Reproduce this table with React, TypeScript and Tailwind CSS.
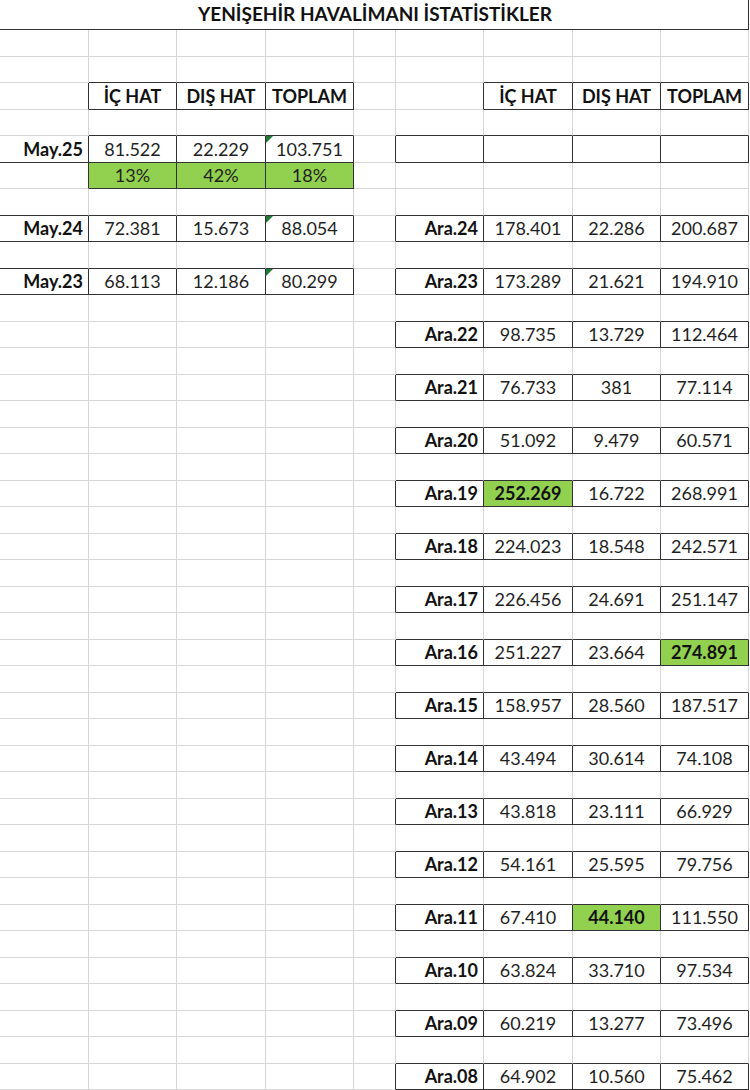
type Sides = { t?: boolean; b?: boolean; l?: boolean; r?: boolean };

interface Cell {
  text?: string;
  bold?: boolean;
  label?: boolean;
  green?: boolean;
  tri?: boolean;
  dark?: Sides;
}

const ROWS = 40;
const COLS = 9;
const ALL: Sides = { t: true, b: true, l: true, r: true };

const leftRows: { row: number; label: string; values: string[] }[] = [
  { row: 4, label: 'May.25', values: ['81.522', '22.229', '103.751'] },
  { row: 7, label: 'May.24', values: ['72.381', '15.673', '88.054'] },
  { row: 9, label: 'May.23', values: ['68.113', '12.186', '80.299'] },
];

const rightRows: { label: string; values: string[]; hi?: number }[] = [
  { label: 'Ara.24', values: ['178.401', '22.286', '200.687'] },
  { label: 'Ara.23', values: ['173.289', '21.621', '194.910'] },
  { label: 'Ara.22', values: ['98.735', '13.729', '112.464'] },
  { label: 'Ara.21', values: ['76.733', '381', '77.114'] },
  { label: 'Ara.20', values: ['51.092', '9.479', '60.571'] },
  { label: 'Ara.19', values: ['252.269', '16.722', '268.991'], hi: 0 },
  { label: 'Ara.18', values: ['224.023', '18.548', '242.571'] },
  { label: 'Ara.17', values: ['226.456', '24.691', '251.147'] },
  { label: 'Ara.16', values: ['251.227', '23.664', '274.891'], hi: 2 },
  { label: 'Ara.15', values: ['158.957', '28.560', '187.517'] },
  { label: 'Ara.14', values: ['43.494', '30.614', '74.108'] },
  { label: 'Ara.13', values: ['43.818', '23.111', '66.929'] },
  { label: 'Ara.12', values: ['54.161', '25.595', '79.756'] },
  { label: 'Ara.11', values: ['67.410', '44.140', '111.550'], hi: 1 },
  { label: 'Ara.10', values: ['63.824', '33.710', '97.534'] },
  { label: 'Ara.09', values: ['60.219', '13.277', '73.496'] },
  { label: 'Ara.08', values: ['64.902', '10.560', '75.462'] },
];

function buildSheet(): Cell[][] {
  const s: Cell[][] = Array.from({ length: ROWS }, () => Array.from({ length: COLS }, () => ({})));
  const heads = ['İÇ HAT', 'DIŞ HAT', 'TOPLAM'];

  heads.forEach((h, i) => {
    s[2][1 + i] = { text: h, bold: true, dark: ALL };
    s[2][6 + i] = { text: h, bold: true, dark: ALL };
  });

  leftRows.forEach((r, idx) => {
    s[r.row][0] = { text: r.label, label: true, dark: idx === 0 ? { b: true } : { t: true, b: true } };
    r.values.forEach((v, i) => {
      s[r.row][1 + i] = { text: v, dark: ALL, tri: i === 2 };
    });
  });

  ['13%', '42%', '18%'].forEach((v, i) => {
    s[5][1 + i] = { text: v, green: true, dark: ALL };
  });

  // empty bordered row on the right
  for (let c = 5; c < 9; c++) s[4][c] = { dark: ALL };

  rightRows.forEach((r, k) => {
    const row = 7 + k * 2;
    s[row][5] = { text: r.label, label: true, dark: ALL };
    r.values.forEach((v, i) => {
      const hi = r.hi === i;
      s[row][6 + i] = { text: v, dark: ALL, green: hi, bold: hi };
    });
  });

  return s;
}

export default function App() {
  const sheet = buildSheet();

  const isDarkRight = (r: number, c: number) =>
    !!sheet[r][c].dark?.r || (c + 1 < COLS && !!sheet[r][c + 1].dark?.l);
  const isDarkBottom = (r: number, c: number) =>
    !!sheet[r][c].dark?.b || (r + 1 < ROWS && !!sheet[r + 1][c].dark?.t);
  const isDarkTop = (c: number) => !!sheet[0][c].dark?.t;

  return (
    <div
      className="w-[750px] h-[1090px] bg-white overflow-hidden text-[#1f1f1f]"
      style={{ fontFamily: 'Lato, "Open Sans", sans-serif' }}
    >
      <div className="w-[749px] h-[30px] border-b border-r border-[#333333] flex items-center justify-center pl-[2px] text-[19px] font-bold text-[#111111]">
        YENİŞEHİR HAVALİMANI İSTATİSTİKLER
      </div>
      <div className="grid grid-cols-[89px_88px_89px_88px_42px_88px_89px_88px_88px] auto-rows-[26.5px]">
        {sheet.map((row, r) =>
          row.map((cell, c) => {
            const rightCls = isDarkRight(r, c) ? 'border-r-[#333333]' : 'border-r-[#d6d6d6]';
            const bottomCls = isDarkBottom(r, c) ? 'border-b-[#333333]' : 'border-b-[#d6d6d6]';
            const topCls = r === 0 && isDarkTop(c) ? 'border-t border-t-[#333333]' : '';
            return (
              <div
                key={`${r}-${c}`}
                className={`relative flex items-center border-r border-b ${rightCls} ${bottomCls} ${topCls} ${
                  cell.green ? 'bg-[#92d050]' : ''
                } ${cell.label ? 'justify-end pr-[5px] font-bold text-[#111111]' : 'justify-center'} ${
                  cell.bold ? 'font-bold text-[#111111]' : ''
                } text-[18px] leading-none whitespace-nowrap`}
              >
                {cell.tri && (
                  <span className="absolute left-0 top-0 w-0 h-0 border-t-[7px] border-t-[#1e7b34] border-r-[7px] border-r-transparent" />
                )}
                {cell.text}
              </div>
            );
          })
        )}
      </div>
    </div>
  );
}
